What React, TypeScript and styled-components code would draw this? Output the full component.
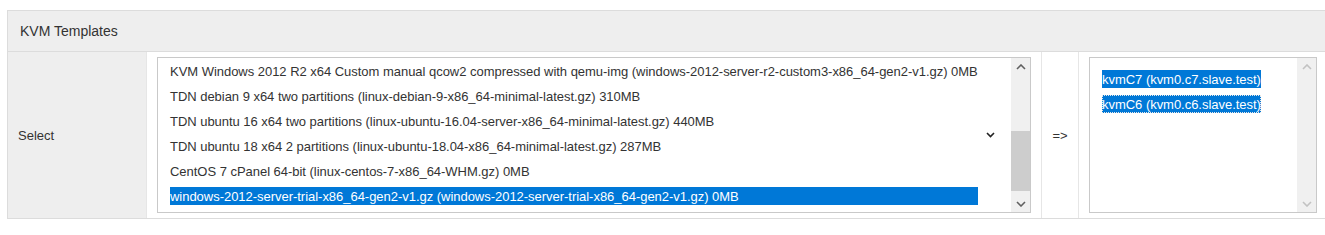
import React from 'react';
import styled, { createGlobalStyle } from 'styled-components';

const GlobalStyle = createGlobalStyle`
  html, body {
    margin: 0;
    padding: 0;
    background: #ffffff;
    overflow: hidden;
  }
  body {
    font-family: "Liberation Sans", Arial, sans-serif;
    color: #333333;
  }
`;

// page + table
const Page = styled.div`
  padding: 10px 0 0 7px;
`;

const Table = styled.div`
  width: 1321px;
  border: 1px solid #dcdcdc;
  box-sizing: border-box;
`;

const HeaderRow = styled.div`
  height: 41px;
  display: flex;
  align-items: center;
  padding-left: 12px;
  background: #eeeeee;
  border-bottom: 1px solid #dcdcdc;
  box-sizing: border-box;
  font-size: 14px;
  color: #333;
`;

const BodyRow = styled.div`
  display: grid;
  grid-template-columns: 139px 895px 37px 1fr;
  height: 166px;
`;

const Cell = styled.div<{ $bg?: string; $center?: boolean }>`
  box-sizing: border-box;
  border-right: 1px solid #e6e6e6;
  background: ${p => p.$bg || '#ffffff'};
  padding: 5px 10px;
  font-size: 13px;
  display: flex;
  align-items: ${p => (p.$center ? 'center' : 'stretch')};
  justify-content: ${p => (p.$center ? 'center' : 'flex-start')};
`;

const LabelCell = styled(Cell)`
  align-items: center;
  padding-left: 10px;
`;

const ArrowCell = styled(Cell)`
  padding: 0;
`;

// list boxes
const ListBox = styled.div<{ $width: number }>`
  position: relative;
  width: ${p => p.$width}px;
  height: 156px;
  box-sizing: border-box;
  border: 1px solid #c9c9c9;
  background: #fff;
  display: flex;
  overflow: hidden;
`;

const OptionsArea = styled.div<{ $top: number }>`
  flex: 1;
  padding: ${p => p.$top}px 12px 0 12px;
  overflow: hidden;
`;

const OptionList = styled.div`
  display: grid;
  width: max-content;
  row-gap: 7px;
`;

const Option = styled.div<{ $selected?: boolean; $focused?: boolean }>`
  height: 18px;
  line-height: 19px;
  padding: 0;
  white-space: nowrap;
  font-size: 13px;
  letter-spacing: -0.03px;
  color: ${p => (p.$selected ? '#ffffff' : '#333333')};
  background: ${p => (p.$selected ? '#0078d7' : 'transparent')};
  outline: ${p => (p.$focused ? '1px dotted #e8e8e8' : 'none')};
  outline-offset: -1px;
`;

const DropArrow = styled.svg`
  position: absolute;
  right: 35px;
  top: 74px;
`;

// scrollbar
const Scrollbar = styled.div`
  width: 19px;
  background: #f0f0f0;
  display: flex;
  flex-direction: column;
`;

const ScrollButton = styled.div`
  height: 17px;
  display: flex;
  align-items: center;
  justify-content: center;
`;

const Track = styled.div`
  flex: 1;
  display: flex;
  flex-direction: column;
`;

const Thumb = styled.div<{ $offset: number; $size: number }>`
  margin-top: ${p => p.$offset}px;
  height: ${p => p.$size}px;
  background: #cdcdcd;
`;

const Chevron: React.FC<{ up?: boolean; color: string }> = ({ up, color }) => (
  <svg width="10" height="6" viewBox="0 0 10 6">
    <path
      d={up ? 'M1 5 L5 1 L9 5' : 'M1 1 L5 5 L9 1'}
      fill="none"
      stroke={color}
      strokeWidth="1.6"
    />
  </svg>
);

const ScrollBar: React.FC<{ disabled?: boolean; thumb?: [number, number] }> = ({ disabled, thumb }) => {
  const color = disabled ? '#c2c2c2' : '#606060';
  return (
    <Scrollbar>
      <ScrollButton><Chevron up color={color} /></ScrollButton>
      <Track>{thumb && <Thumb $offset={thumb[0]} $size={thumb[1]} />}</Track>
      <ScrollButton><Chevron color={color} /></ScrollButton>
    </Scrollbar>
  );
};

const templates = [
  'KVM Windows 2012 R2 x64 Custom manual qcow2 compressed with qemu-img (windows-2012-server-r2-custom3-x86_64-gen2-v1.gz) 0MB',
  'TDN debian 9 x64 two partitions (linux-debian-9-x86_64-minimal-latest.gz) 310MB',
  'TDN ubuntu 16 x64 two partitions (linux-ubuntu-16.04-server-x86_64-minimal-latest.gz) 440MB',
  'TDN ubuntu 18 x64 2 partitions (linux-ubuntu-18.04-x86_64-minimal-latest.gz) 287MB',
  'CentOS 7 cPanel 64-bit (linux-centos-7-x86_64-WHM.gz) 0MB',
  'windows-2012-server-trial-x86_64-gen2-v1.gz (windows-2012-server-trial-x86_64-gen2-v1.gz) 0MB',
];

const nodes = ['kvmC7 (kvm0.c7.slave.test)', 'kvmC6 (kvm0.c6.slave.test)'];

const App: React.FC = () => {
  return (
    <Page>
      <GlobalStyle />
      <Table>
        <HeaderRow>KVM Templates</HeaderRow>
        <BodyRow>
          <LabelCell $bg="#eeeeee">Select</LabelCell>
          <Cell>
            <ListBox $width={874}>
              <OptionsArea $top={4}>
                <OptionList>
                  {templates.map((t, i) => (
                    <Option key={t} $selected={i === templates.length - 1}>{t}</Option>
                  ))}
                </OptionList>
              </OptionsArea>
              <DropArrow width="9" height="6" viewBox="0 0 9 6">
                <path d="M1 1 L4.5 4.5 L8 1" fill="none" stroke="#222" strokeWidth="1.6" />
              </DropArrow>
              <ScrollBar thumb={[56, 60]} />
            </ListBox>
          </Cell>
          <ArrowCell $center>=&gt;</ArrowCell>
          <Cell>
            <ListBox $width={228}>
              <OptionsArea $top={12}>
                <OptionList>
                  {nodes.map((n, i) => (
                    <Option key={n} $selected $focused={i === 1}>{n}</Option>
                  ))}
                </OptionList>
              </OptionsArea>
              <ScrollBar disabled />
            </ListBox>
          </Cell>
        </BodyRow>
      </Table>
    </Page>
  );
};

export default App;
